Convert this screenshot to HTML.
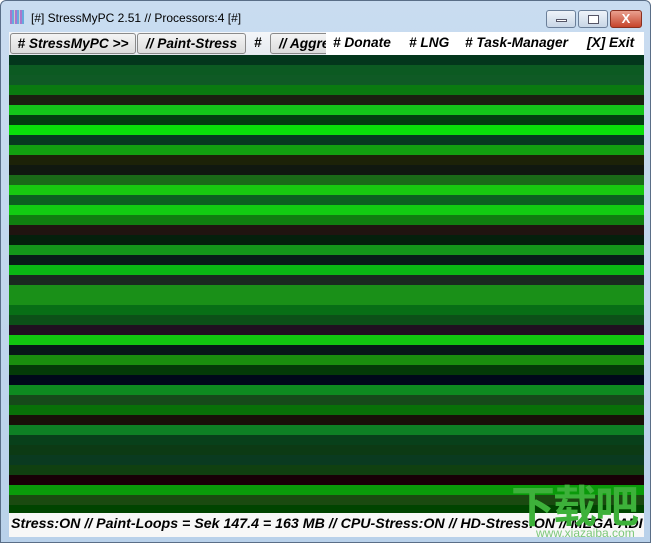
<!DOCTYPE html>
<html><head><style>
*{margin:0;padding:0;box-sizing:border-box}
body{width:651px;height:543px;background:#fff;position:relative;overflow:hidden;font-family:"Liberation Sans",sans-serif}
.win{position:absolute;left:0;top:0;width:651px;height:543px;background:linear-gradient(#c9dcf0,#b9d1ea);border:1px solid #5a6e87;border-radius:6px 6px 0 0}
.title{position:absolute;left:30px;top:10px;font-size:12px;color:#000}
.ico{position:absolute;left:9px;top:9px;width:14px;height:14px;background:repeating-linear-gradient(90deg,#a7c 0 2px,#6ad 2px 4px,#ccc 4px 5px)}
.cb{position:absolute;top:9px;height:18px;border:1px solid #6b7f99;border-radius:3px;background:linear-gradient(#eef3f9,#c8d6e6)}
.menu{position:absolute;left:8px;top:31px;width:635px;height:23px;background:linear-gradient(#f4f6f9,#e6eaf0)}
.btn{position:absolute;top:1px;height:21px;border:1px solid #8a8a8a;border-radius:3px;background:linear-gradient(#f4f4f4,#dcdcdc);font:italic bold 13.7px "Liberation Sans",sans-serif;line-height:19px;text-align:center;white-space:nowrap}
.mt{position:absolute;top:3px;font:italic bold 13.7px "Liberation Sans",sans-serif;white-space:nowrap}
.area{position:absolute;left:8px;top:54px;width:635px;height:458px}
.area div{height:10px}
.status{position:absolute;left:8px;top:512px;width:635px;height:24px;background:#f7f7f7;font:italic bold 14.2px "Liberation Sans",sans-serif;padding:3px 0 0 2px;white-space:nowrap;overflow:hidden}
.wm{position:absolute;left:510px;top:478px;font:bold 44px "Noto Sans CJK SC",sans-serif;color:#3db13a;letter-spacing:-2px;line-height:48px}
.wm2{position:absolute;left:535px;top:525px;font:12px "Liberation Sans",sans-serif;color:#7dc87a}
</style></head><body>
<div class="win">
<div class="ico"></div>
<div class="title">[#] StressMyPC 2.51 // Processors:4 [#]</div>
<div class="cb" style="left:545px;width:30px"><div style="position:absolute;left:9px;top:8px;width:11px;height:3px;background:#fff;border:1px solid #556"></div></div>
<div class="cb" style="left:577px;width:30px"><div style="position:absolute;left:9px;top:4px;width:11px;height:9px;border:1px solid #556;background:#fff"></div></div>
<div class="cb" style="left:609px;width:32px;background:linear-gradient(#e9a190,#c6442b);border-color:#8a3020;color:#fff;font:bold 13px sans-serif;text-align:center;line-height:16px">X</div>
<div class="menu">
<div class="btn" style="left:1px;width:126px"># StressMyPC &gt;&gt;</div>
<div class="btn" style="left:128px;width:109px">// Paint-Stress</div>
<div class="mt" style="left:245px">#</div>
<div class="btn" style="left:261px;width:60px;text-align:left;padding-left:8px;overflow:hidden">// Aggressive</div>
<div style="position:absolute;left:317px;top:0;width:318px;height:23px;background:#fff"></div>
<div class="mt" style="left:324px"># Donate</div>
<div class="mt" style="left:400px"># LNG</div>
<div class="mt" style="left:456px"># Task-Manager</div>
<div class="mt" style="left:578px">[X] Exit</div>
</div>
<div class="area">
<div style="background:#03361c"></div><div style="background:#0c5a22"></div><div style="background:#0f5a25"></div><div style="background:#0a7a10"></div><div style="background:#1a2010"></div><div style="background:#14c41a"></div><div style="background:#033d10"></div><div style="background:#0adf0a"></div><div style="background:#073a20"></div><div style="background:#12a010"></div><div style="background:#1c2208"></div><div style="background:#101810"></div><div style="background:#1a6a18"></div><div style="background:#18c810"></div><div style="background:#0c6020"></div><div style="background:#12cc12"></div><div style="background:#107e10"></div><div style="background:#201410"></div><div style="background:#04200c"></div><div style="background:#14961a"></div><div style="background:#081c18"></div><div style="background:#0ab814"></div><div style="background:#1a2a20"></div><div style="background:#1a9018"></div><div style="background:#1a9018"></div><div style="background:#086e16"></div><div style="background:#0c5018"></div><div style="background:#201020"></div><div style="background:#12c610"></div><div style="background:#081818"></div><div style="background:#1a8e0e"></div><div style="background:#043a08"></div><div style="background:#00081a"></div><div style="background:#0e8a20"></div><div style="background:#164a1a"></div><div style="background:#087008"></div><div style="background:#181008"></div><div style="background:#0e8024"></div><div style="background:#08401a"></div><div style="background:#0c3a14"></div><div style="background:#0a3a20"></div><div style="background:#104010"></div><div style="background:#180006"></div><div style="background:#0a9a0a"></div><div style="background:#1a4a10"></div><div style="background:#004400;height:8px"></div>
</div>
<div class="status">Stress:ON // Paint-Loops = Sek 147.4 = 163 MB // CPU-Stress:ON // HD-Stress:ON // MEGA-ADI</div>
<div class="wm">下载吧</div>
<div class="wm2">www.xiazaiba.com</div>
</div>
</body></html>
